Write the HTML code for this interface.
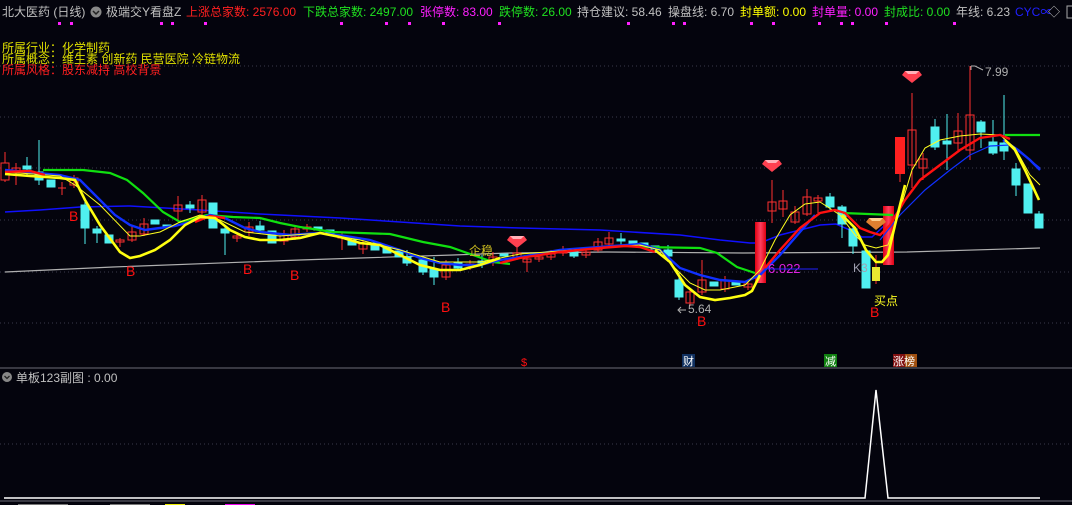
<!DOCTYPE html>
<html><head><meta charset="utf-8"><style>
html,body{margin:0;padding:0;background:#04040d;width:1072px;height:505px;overflow:hidden}
svg{display:block}
text{font-family:"Liberation Sans","Noto Sans CJK SC",sans-serif}
</style></head><body>
<svg width="1072" height="505" viewBox="0 0 1072 505" xmlns="http://www.w3.org/2000/svg">
<rect width="1072" height="505" fill="#04040d"/>
<!-- header -->
<g font-size="12">
<text x="2" y="16" fill="#c0c0c0">北大医药 (日线)</text>
<circle cx="96" cy="12" r="5.5" fill="#888"/><path d="M93 11 L96 14 L99 11" stroke="#222" stroke-width="1.5" fill="none"/>
<text x="106" y="16" fill="#c0c0c0">极端交Y看盘Z</text>
<text x="186" y="16" fill="#ff2020">上涨总家数: 2576.00</text>
<text x="303" y="16" fill="#20e020">下跌总家数: 2497.00</text>
<text x="420" y="16" fill="#ff20ff">张停数: 83.00</text>
<text x="499" y="16" fill="#20e020">跌停数: 26.00</text>
<text x="577" y="16" fill="#c0c0c0">持仓建议: 58.46</text>
<text x="668" y="16" fill="#c0c0c0">操盘线: 6.70</text>
<text x="740" y="16" fill="#ffff00">封单额: 0.00</text>
<text x="812" y="16" fill="#ff20ff">封单量: 0.00</text>
<text x="884" y="16" fill="#20e020">封成比: 0.00</text>
<text x="956" y="16" fill="#c0c0c0">年线: 6.23</text>
<text x="1015" y="16" fill="#2020ff">CYC∝</text><text x="1048" y="16" fill="#c0c0c0">◇</text>
<rect x="1067" y="6" width="8" height="12" fill="none" stroke="#aaa"/>
</g>
<g fill="#ff20ff">
<rect x="58" y="22" width="3" height="3"/><rect x="70" y="22" width="3" height="3"/><rect x="160" y="22" width="3" height="3"/><rect x="171" y="22" width="3" height="3"/><rect x="204" y="22" width="3" height="3"/><rect x="340" y="22" width="3" height="3"/><rect x="385" y="22" width="3" height="3"/><rect x="408" y="22" width="3" height="3"/><rect x="442" y="22" width="3" height="3"/><rect x="498" y="22" width="3" height="3"/><rect x="627" y="22" width="3" height="3"/><rect x="672" y="22" width="3" height="3"/><rect x="683" y="22" width="3" height="3"/><rect x="750" y="22" width="3" height="3"/><rect x="772" y="22" width="3" height="3"/><rect x="818" y="22" width="3" height="3"/><rect x="840" y="22" width="3" height="3"/><rect x="851" y="22" width="3" height="3"/><rect x="885" y="22" width="3" height="3"/><rect x="953" y="22" width="3" height="3"/>
</g>
<!-- grid -->
<g stroke="#3a3a4a" stroke-dasharray="1,3">
<line x1="0" y1="66" x2="1072" y2="66"/><line x1="0" y1="117" x2="1072" y2="117"/><line x1="0" y1="168" x2="1072" y2="168"/><line x1="0" y1="220" x2="1072" y2="220"/><line x1="0" y1="272" x2="1072" y2="272"/><line x1="0" y1="323" x2="1072" y2="323"/><line x1="0" y1="444" x2="1072" y2="444"/>
</g>
<!-- info lines -->
<g font-size="12">
<text x="2" y="52" fill="#e0e000">所属行业：化学制药</text>
<text x="2" y="63" fill="#e0e000">所属概念：维生素 创新药 民营医院 冷链物流</text>
<text x="2" y="74" fill="#ff2020">所属风格：股东减持 高校背景</text>
</g>
<!-- gray line -->
<polyline fill="none" stroke="#b0b0b0" stroke-width="1.2" points="5,272 113,267 300,260 360,258 453,255 510,253 607,252 743,253 907,252 1040,248"/>
<!-- blue slow -->
<polyline fill="none" stroke="#1010ff" stroke-width="1.5" points="5,212 40,210 80,207 130,206 200,210 260,214 340,218 400,222 460,226 520,228 600,230 680,235 720,240 750,243 760,243 780,235 800,230 820,225 836,224 850,230 862,237 872,237 885,225 900,210"/>
<!-- candles -->
<g stroke-width="1">
<g stroke="#ff3030" fill="none">
<line x1="5" y1="152" x2="5" y2="182"/><rect x="1" y="163" width="8" height="17" fill="#04040d"/>
<line x1="16" y1="163" x2="16" y2="185"/><rect x="12" y="168" width="8" height="3"/>
<line x1="62" y1="182" x2="62" y2="195"/><line x1="58" y1="188" x2="66" y2="188"/>
<line x1="74" y1="175" x2="74" y2="188"/><rect x="70" y="178" width="8" height="7"/>
<line x1="120" y1="238" x2="120" y2="247"/><rect x="116" y="240" width="8" height="2"/>
<line x1="132" y1="226" x2="132" y2="242"/><rect x="128" y="232" width="8" height="8"/>
<line x1="144" y1="218" x2="144" y2="236"/><rect x="140" y="224" width="8" height="10"/>
<line x1="178" y1="196" x2="178" y2="220"/><rect x="174" y="205" width="8" height="6"/>
<line x1="202" y1="195" x2="202" y2="216"/><rect x="198" y="200" width="8" height="12"/>
<line x1="237" y1="232" x2="237" y2="242"/><rect x="233" y="236" width="8" height="2"/>
<line x1="249" y1="222" x2="249" y2="236"/><rect x="245" y="227" width="8" height="5"/>
<line x1="284" y1="230" x2="284" y2="245"/><rect x="280" y="234" width="8" height="7"/>
<line x1="295" y1="225" x2="295" y2="240"/><rect x="291" y="229" width="8" height="8"/>
<line x1="307" y1="224" x2="307" y2="232"/><rect x="303" y="227" width="8" height="2"/>
<line x1="342" y1="232" x2="342" y2="250"/><rect x="338" y="236" width="8" height="2"/>
<line x1="363" y1="240" x2="363" y2="254"/><rect x="359" y="244" width="8" height="5"/>
<line x1="446" y1="260" x2="446" y2="280"/><rect x="442" y="265" width="8" height="12"/>
<line x1="470" y1="260" x2="470" y2="270"/><rect x="466" y="264" width="8" height="2"/>
<line x1="493" y1="252" x2="493" y2="266"/><rect x="489" y="257" width="8" height="5"/>
<line x1="517" y1="248" x2="517" y2="260"/><rect x="513" y="253" width="8" height="4"/>
<line x1="527" y1="255" x2="527" y2="272"/><rect x="523" y="259" width="8" height="3"/>
<line x1="539" y1="254" x2="539" y2="262"/><rect x="535" y="257" width="8" height="2"/>
<line x1="551" y1="250" x2="551" y2="260"/><rect x="547" y="254" width="8" height="3"/>
<line x1="563" y1="246" x2="563" y2="256"/><rect x="559" y="250" width="8" height="3"/>
<line x1="586" y1="248" x2="586" y2="258"/><rect x="582" y="252" width="8" height="3"/>
<line x1="598" y1="238" x2="598" y2="252"/><rect x="594" y="242" width="8" height="8"/>
<line x1="609" y1="232" x2="609" y2="246"/><rect x="605" y="238" width="8" height="6"/>
<line x1="690" y1="290" x2="690" y2="306"/><rect x="686" y="292" width="8" height="11"/>
<line x1="702" y1="260" x2="702" y2="295"/><rect x="698" y="280" width="8" height="12"/>
<line x1="725" y1="276" x2="725" y2="292"/><rect x="721" y="280" width="8" height="9"/>
<line x1="748" y1="281" x2="748" y2="290"/><rect x="744" y="284" width="8" height="3"/>
<line x1="772" y1="180" x2="772" y2="223"/><rect x="768" y="202" width="8" height="9"/>
<line x1="783" y1="190" x2="783" y2="217"/><rect x="779" y="201" width="8" height="8"/>
<line x1="795" y1="206" x2="795" y2="224"/><rect x="791" y="212" width="8" height="10"/>
<line x1="807" y1="189" x2="807" y2="216"/><rect x="803" y="197" width="8" height="17"/>
<line x1="818" y1="195" x2="818" y2="213"/><rect x="814" y="198" width="8" height="3"/>
<line x1="900" y1="137" x2="900" y2="182"/>
<line x1="912" y1="93" x2="912" y2="188"/><rect x="908" y="130" width="8" height="35"/>
<line x1="923" y1="153" x2="923" y2="180"/><rect x="919" y="159" width="8" height="9"/>
<line x1="958" y1="113" x2="958" y2="152"/><rect x="954" y="131" width="8" height="12"/>
<line x1="970" y1="66" x2="970" y2="160"/><rect x="966" y="115" width="8" height="35"/>
</g>
<g stroke="#50f0f0" fill="#50f0f0">
<line x1="27" y1="157" x2="27" y2="177"/><rect x="23" y="166" width="8" height="3"/>
<line x1="39" y1="140" x2="39" y2="185"/><rect x="35" y="172" width="8" height="8"/>
<rect x="47" y="180" width="8" height="7"/>
<line x1="85" y1="200" x2="85" y2="244"/><rect x="81" y="205" width="8" height="23"/>
<line x1="97" y1="226" x2="97" y2="243"/><rect x="93" y="229" width="8" height="4"/>
<rect x="105" y="235" width="8" height="8"/>
<rect x="151" y="220" width="8" height="4"/>
<rect x="163" y="225" width="8" height="2"/>
<line x1="190" y1="201" x2="190" y2="213"/><rect x="186" y="205" width="8" height="3"/>
<rect x="209" y="203" width="8" height="25"/>
<line x1="225" y1="226" x2="225" y2="255"/><rect x="221" y="229" width="8" height="4"/>
<line x1="260" y1="221" x2="260" y2="234"/><rect x="256" y="226" width="8" height="4"/>
<rect x="268" y="231" width="8" height="12"/>
<rect x="314" y="227" width="8" height="3"/>
<rect x="326" y="230" width="8" height="3"/>
<rect x="348" y="240" width="8" height="5"/>
<rect x="371" y="243" width="8" height="7"/>
<rect x="383" y="248" width="8" height="5"/>
<rect x="395" y="251" width="8" height="6"/>
<line x1="407" y1="250" x2="407" y2="266"/><rect x="403" y="257" width="8" height="6"/>
<line x1="423" y1="257" x2="423" y2="275"/><rect x="419" y="260" width="8" height="12"/>
<line x1="434" y1="257" x2="434" y2="285"/><rect x="430" y="269" width="8" height="8"/>
<line x1="458" y1="258" x2="458" y2="270"/><rect x="454" y="262" width="8" height="6"/>
<line x1="482" y1="255" x2="482" y2="268"/><rect x="478" y="261" width="8" height="2"/>
<rect x="500" y="254" width="8" height="2"/>
<line x1="574" y1="248" x2="574" y2="258"/><rect x="570" y="251" width="8" height="5"/>
<line x1="621" y1="233" x2="621" y2="245"/><rect x="617" y="239" width="8" height="2"/>
<rect x="629" y="241" width="8" height="4"/>
<rect x="640" y="243" width="8" height="3"/>
<rect x="651" y="246" width="8" height="3"/>
<line x1="668" y1="245" x2="668" y2="262"/><rect x="664" y="250" width="8" height="6"/>
<line x1="679" y1="273" x2="679" y2="300"/><rect x="675" y="280" width="8" height="17"/>
<rect x="710" y="282" width="8" height="4"/>
<rect x="732" y="281" width="8" height="4"/>
<line x1="830" y1="193" x2="830" y2="210"/><rect x="826" y="197" width="8" height="10"/>
<line x1="842" y1="205" x2="842" y2="238"/><rect x="838" y="207" width="8" height="17"/>
<line x1="853" y1="225" x2="853" y2="254"/><rect x="849" y="229" width="8" height="17"/>
<rect x="862" y="251" width="8" height="37"/>
<line x1="935" y1="119" x2="935" y2="150"/><rect x="931" y="127" width="8" height="20"/>
<line x1="947" y1="114" x2="947" y2="170"/><rect x="943" y="141" width="8" height="3"/>
<line x1="981" y1="120" x2="981" y2="148"/><rect x="977" y="122" width="8" height="10"/>
<line x1="993" y1="120" x2="993" y2="155"/><rect x="989" y="142" width="8" height="11"/>
<line x1="1004" y1="95" x2="1004" y2="160"/><rect x="1000" y="143" width="8" height="8"/>
<line x1="1016" y1="163" x2="1016" y2="196"/><rect x="1012" y="169" width="8" height="16"/>
<rect x="1024" y="184" width="8" height="29"/>
<line x1="1039" y1="211" x2="1039" y2="228"/><rect x="1035" y="214" width="8" height="14"/>
</g>
<line x1="876" y1="255" x2="876" y2="284" stroke="#ff3030"/>
<rect x="872" y="267" width="8" height="14" fill="#e8e830"/>
<defs><linearGradient id="lu" x1="0" x2="1"><stop offset="0" stop-color="#e00010"/><stop offset="0.5" stop-color="#ff4060"/><stop offset="1" stop-color="#e00010"/></linearGradient></defs>
<line x1="900" y1="174" x2="900" y2="182" stroke="#ff3030"/>
<rect x="895" y="137" width="10" height="37" fill="#ff2020"/>
<rect x="755" y="222" width="11" height="61" fill="url(#lu)"/>
<rect x="883" y="206" width="11" height="59" fill="url(#lu)"/>
</g>
<!-- green -->
<polyline fill="none" stroke="#10e010" stroke-width="2.2" points="43,170 83,170 110,173 127,180 143,193 163,212 180,222 207,215 233,217 260,218 280,223 300,227 333,232 390,234 423,242 450,247 473,255 493,262 510,264"/>
<polyline fill="none" stroke="#10e010" stroke-width="2.2" points="640,247 700,248 717,253 737,267 755,273"/>
<polyline fill="none" stroke="#10e010" stroke-width="2.2" points="843,213 893,215"/>
<polyline fill="none" stroke="#10e010" stroke-width="2.2" points="1005,135 1040,135"/>
<!-- blue thick -->
<polyline fill="none" stroke="#1030ff" stroke-width="2.4" points="5,170 60,175 80,180 100,200 115,215 130,225 145,230 160,228 175,226 190,222 210,215 225,218 245,228 260,232 290,235 320,233 345,236 370,240 400,250 420,258 440,263 460,265 480,265 500,260 520,257 560,250 600,247 640,244 660,250 680,268 700,275 720,280 745,282 760,275 780,255 800,232 815,215"/>
<polyline fill="none" stroke="#1030ff" stroke-width="2.4" points="1003,140 1018,150 1030,160 1040,170"/>
<polyline fill="none" stroke="#1030ff" stroke-width="1.2" points="880,240 900,215 925,190 950,170 970,155 990,146 1010,145 1030,160 1040,168"/>
<!-- yellow thin -->
<polyline fill="none" stroke="#ffff20" stroke-width="1" points="5,172 60,176 75,185 100,205 130,236 140,236 160,232 180,222 200,215 220,220 245,232 280,236 320,233 360,240 400,250 440,262 480,262 520,254 600,248 640,245 660,250 675,268 690,283 705,290 720,290 745,285 760,270 775,240 790,215 805,204 820,202 840,215 855,235 865,245 876,248 888,245 900,210 912,170 925,148 940,140 960,136 980,134 1000,135 1015,148 1030,175 1040,185"/>
<!-- red thick -->
<polyline fill="none" stroke="#ff1010" stroke-width="2.4" points="5,172 30,171 45,175"/>
<polyline fill="none" stroke="#ff1010" stroke-width="2.4" points="195,222 210,216 225,218"/>
<polyline fill="none" stroke="#ff1010" stroke-width="2.4" points="500,263 520,258 560,252 600,248 625,246 640,247 655,252"/>
<polyline fill="none" stroke="#ff1010" stroke-width="2.4" points="765,268 780,250 800,228 820,213 835,210 845,213 860,228 870,232 880,235 890,225 905,200 920,180 940,165 960,150 980,138 1000,135 1010,139"/>
<!-- yellow thick -->
<polyline fill="none" stroke="#ffff10" stroke-width="2.6" points="5,174 30,176 60,178 75,180 85,200 100,225 120,252 130,258 140,256 155,250 170,240 185,225 200,217 215,218 230,230 245,237 260,240 280,240 300,238 320,233 340,237 360,243 380,245 400,255 420,265 440,270 460,270 480,265 500,258"/>
<polyline fill="none" stroke="#ffff10" stroke-width="2.6" points="655,250 670,262 685,285 700,297 715,300 730,298 745,295 752,291 760,275"/>
<polyline fill="none" stroke="#ffff10" stroke-width="2.6" points="842,215 855,228 866,250 876,262 882,262 888,255 895,225 905,185"/>
<polyline fill="none" stroke="#ffff10" stroke-width="2.6" points="1005,140 1015,150 1025,170 1032,185 1039,200"/>
<!-- annotations -->
<g fill="#ff1010" font-size="14">
<text x="69" y="221">B</text><text x="126" y="276">B</text><text x="243" y="274">B</text><text x="290" y="280">B</text><text x="441" y="312">B</text><text x="697" y="326">B</text><text x="870" y="317">B</text>
</g>
<text x="874" y="305" fill="#ffff20" font-size="12">买点</text>
<text x="853" y="272" fill="#a0a0b0" font-size="12">K3</text>
<text x="768" y="273" fill="#e020e0" font-size="13">6.022</text>
<line x1="768" y1="269" x2="818" y2="269" stroke="#2020ff"/>
<text x="688" y="313" fill="#b0b0b0" font-size="12">5.64</text>
<path d="M686 310 L679 310 M681 307 L678 310 L681 313" stroke="#b0b0b0" fill="none"/>
<text x="985" y="76" fill="#b0b0b0" font-size="12">7.99</text>
<path d="M971 66 L975 66 L983 70 M971 66 L971 70" stroke="#b0b0b0" fill="none"/>
<text x="469" y="255" fill="#d0c020" font-size="12">企稳</text>
<g>
<path d="M510 236 L524 236 L527 240 L517 248 L507 240 Z" fill="#ff4050"/><path d="M510 236 L524 236 L521 239 L513 239Z" fill="#ffb0b8"/>
<path d="M765 160 L779 160 L782 164 L772 172 L762 164 Z" fill="#ff4050"/><path d="M765 160 L779 160 L776 163 L768 163Z" fill="#ffb0b8"/>
<path d="M905 71 L919 71 L922 75 L912 83 L902 75 Z" fill="#ff4050"/><path d="M905 71 L919 71 L916 74 L908 74Z" fill="#ffb0b8"/>
<path d="M869 218 L883 218 L886 222 L876 230 L866 222 Z" fill="#e08030"/><path d="M869 218 L883 218 L880 221 L872 221Z" fill="#ffd090"/>
</g>
<!-- event markers -->
<text x="521" y="366" fill="#ff1010" font-size="11">$</text>
<rect x="682" y="354" width="13" height="13" fill="#103060"/><text x="683" y="365" fill="#fff" font-size="11">财</text>
<rect x="824" y="354" width="13" height="13" fill="#108010"/><text x="825" y="365" fill="#fff" font-size="11">减</text>
<rect x="893" y="354" width="12" height="13" fill="#801010"/><rect x="905" y="354" width="12" height="13" fill="#a05010"/><text x="893" y="365" fill="#fff" font-size="11">涨榜</text>
<!-- divider -->
<line x1="0" y1="368" x2="1072" y2="368" stroke="#4a4a55" stroke-width="1.5"/>
<circle cx="7" cy="377" r="5" fill="#888"/><path d="M4.5 376 L7 378.5 L9.5 376" stroke="#222" stroke-width="1.3" fill="none"/>
<text x="16" y="382" fill="#c0c0c0" font-size="12">单板123副图 : 0.00</text>
<polyline fill="none" stroke="#ffffff" stroke-width="1.5" points="4,498 865,498 876,390 888,498 1040,498"/>
<line x1="0" y1="501" x2="1072" y2="501" stroke="#4a4a55" stroke-width="1.5"/>
<g fill="#777"><rect x="18" y="504" width="50" height="1"/><rect x="110" y="504" width="40" height="1"/></g>
<rect x="165" y="504" width="20" height="1" fill="#ee0"/><rect x="225" y="504" width="30" height="1" fill="#e0e"/>
</svg>
</body></html>
